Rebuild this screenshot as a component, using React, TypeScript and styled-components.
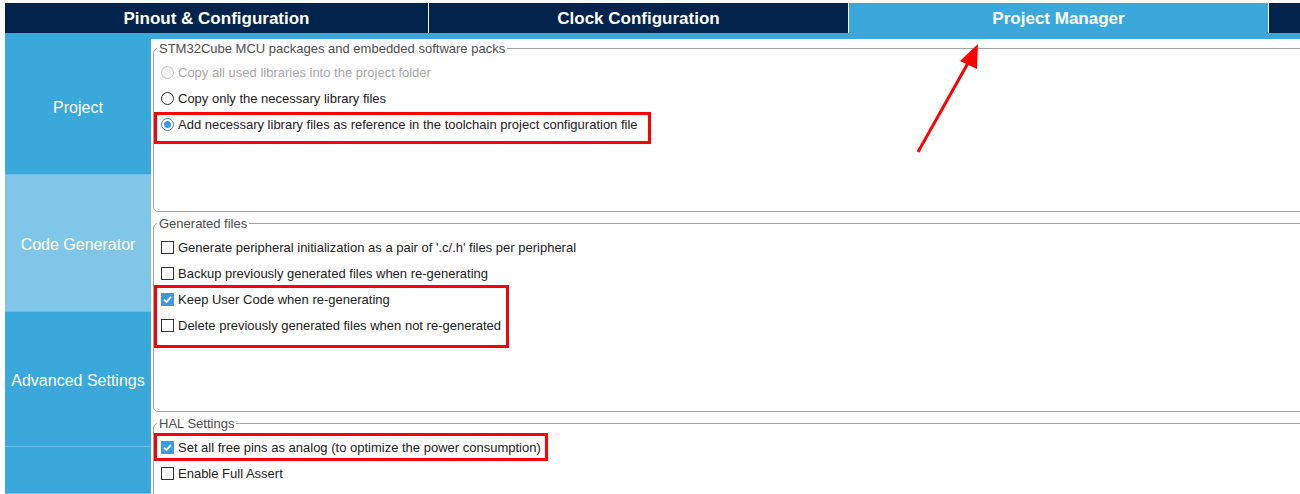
import React from "react";
import styled, { createGlobalStyle } from "styled-components";

const GlobalStyle = createGlobalStyle`
  html, body { margin: 0; padding: 0; background: #ffffff; }
  body { font-family: "Liberation Sans", Arial, sans-serif; }
`;

const NAVY = "#02234b";
const BLUE = "#3aa8db";
const LIGHT = "#7fc6e9";

const Page = styled.div`
  position: relative;
  width: 1300px;
  height: 494px;
  overflow: hidden;
  padding: 3px 0 0 5px;
  box-sizing: border-box;
  background: #fff;
`;

const TabBar = styled.div`
  display: grid;
  grid-template-columns: 423px 419px 419px 1fr;
  column-gap: 1px;
  height: 30px;
  background: #ffffff;
`;

const Tab = styled.div<{ $active?: boolean }>`
  display: flex;
  align-items: center;
  justify-content: center;
  padding-top: 2px;
  box-sizing: border-box;
  background: ${(p) => (p.$active ? BLUE : NAVY)};
  color: #ffffff;
  font-size: 17px;
  font-weight: bold;
`;

const Strip = styled.div`
  height: 6px;
  background: ${BLUE};
`;

const Main = styled.div`
  display: flex;
  height: 455px;
`;

const Sidebar = styled.div`
  width: 146px;
  flex: 0 0 146px;
  display: flex;
  flex-direction: column;
  background: ${BLUE};
`;

const NavItem = styled.div<{ $selected?: boolean; $h: number }>`
  height: ${(p) => p.$h}px;
  flex: 0 0 auto;
  box-sizing: border-box;
  display: flex;
  align-items: center;
  justify-content: center;
  padding-top: 3px;
  background: ${(p) => (p.$selected ? LIGHT : BLUE)};
  border-bottom: 1px solid #6cc0e8;
  color: #ffffff;
  font-size: 16px;
`;

const Content = styled.div`
  flex: 1;
  padding: 2px 0 0 2px;
  overflow: hidden;
  display: flex;
  flex-direction: column;
  gap: 4px;
`;

const Group = styled.fieldset<{ $h: number }>`
  margin: 0 -30px 0 0;
  padding: 3px 0 0 3px;
  height: ${(p) => p.$h}px;
  flex: 0 0 auto;
  box-sizing: border-box;
  border: 1px solid #a3a3a3;
  border-radius: 5px;
  min-width: 0;
`;

const Legend = styled.legend`
  padding: 0 2px;
  font-size: 13px;
  line-height: 15px;
  color: #4d4d4d;
`;

const Row = styled.div<{ $disabled?: boolean }>`
  height: 26px;
  display: flex;
  align-items: center;
  gap: 4px;
  padding-left: 4px;
  font-size: 13px;
  color: ${(p) => (p.$disabled ? "#a8a8a8" : "#222222")};
  white-space: nowrap;
`;

const Radio = styled.span<{ $checked?: boolean; $disabled?: boolean }>`
  width: 13px;
  height: 13px;
  box-sizing: border-box;
  border-radius: 50%;
  border: 1px solid
    ${(p) => (p.$disabled ? "#c4c4c4" : p.$checked ? "#3d7fb5" : "#333333")};
  background: ${(p) => (p.$disabled ? "#f2f2f2" : "#ffffff")};
  display: flex;
  align-items: center;
  justify-content: center;
  flex: 0 0 auto;
  &::after {
    content: "";
    display: ${(p) => (p.$checked ? "block" : "none")};
    width: 7px;
    height: 7px;
    border-radius: 50%;
    background: #3b9ae1;
  }
`;

const Check = styled.span<{ $checked?: boolean }>`
  width: 13px;
  height: 13px;
  box-sizing: border-box;
  border: 1px solid ${(p) => (p.$checked ? "#3b9ae1" : "#333333")};
  background: ${(p) => (p.$checked ? "#3b9ae1" : "#ffffff")};
  display: flex;
  align-items: center;
  justify-content: center;
  flex: 0 0 auto;
  svg {
    display: ${(p) => (p.$checked ? "block" : "none")};
  }
`;

const Highlight = styled.div<{ $t: number; $b: number; $l: number; $w: number }>`
  position: relative;
  &::after {
    content: "";
    position: absolute;
    top: ${(p) => p.$t}px;
    bottom: ${(p) => p.$b}px;
    left: ${(p) => p.$l}px;
    width: ${(p) => p.$w}px;
    border: 3px solid #ff0000;
    box-sizing: border-box;
    pointer-events: none;
  }
`;

const Arrow = styled.svg`
  position: absolute;
  left: 0;
  top: 0;
  pointer-events: none;
`;

const Tick = () => (
  <svg width="11" height="11" viewBox="0 0 11 11">
    <path d="M2 5.6 L4.5 8 L9 2.8" fill="none" stroke="#ffffff" strokeWidth="1.8" />
  </svg>
);

const CheckRow = ({ checked, label }: { checked?: boolean; label: string }) => (
  <Row>
    <Check $checked={checked}>
      <Tick />
    </Check>
    {label}
  </Row>
);

const RadioRow = ({
  checked,
  disabled,
  label,
}: {
  checked?: boolean;
  disabled?: boolean;
  label: string;
}) => (
  <Row $disabled={disabled}>
    <Radio $checked={checked} $disabled={disabled} />
    {label}
  </Row>
);

export default function App() {
  return (
    <>
      <GlobalStyle />
      <Page>
        <TabBar>
          <Tab>Pinout &amp; Configuration</Tab>
          <Tab>Clock Configuration</Tab>
          <Tab $active>Project Manager</Tab>
          <Tab />
        </TabBar>
        <Strip />
        <Main>
          <Sidebar>
            <NavItem $h={136}>Project</NavItem>
            <NavItem $h={137} $selected>
              Code Generator
            </NavItem>
            <NavItem $h={135}>Advanced Settings</NavItem>
            <NavItem $h={47} />
          </Sidebar>
          <Content>
            <Group $h={171}>
              <Legend>STM32Cube MCU packages and embedded software packs</Legend>
              <RadioRow disabled label="Copy all used libraries into the project folder" />
              <RadioRow label="Copy only the necessary library files" />
              <Highlight $t={1} $b={-7} $l={-3} $w={497}>
                <RadioRow checked label="Add necessary library files as reference in the toolchain project configuration file" />
              </Highlight>
            </Group>
            <Group $h={196}>
              <Legend>Generated files</Legend>
              <CheckRow label="Generate peripheral initialization as a pair of '.c/.h' files per peripheral" />
              <CheckRow label="Backup previously generated files when re-generating" />
              <Highlight $t={-1} $b={-10} $l={-3} $w={355}>
                <CheckRow checked label="Keep User Code when re-generating" />
                <CheckRow label="Delete previously generated files when not re-generated" />
              </Highlight>
            </Group>
            <Group $h={120}>
              <Legend>HAL Settings</Legend>
              <Highlight $t={-1} $b={-1} $l={-3} $w={394}>
                <CheckRow checked label="Set all free pins as analog (to optimize the power consumption)" />
              </Highlight>
              <CheckRow label="Enable Full Assert" />
            </Group>
          </Content>
        </Main>
        <Arrow width="1300" height="494" viewBox="0 0 1300 494">
          <line x1="918" y1="152" x2="968" y2="63" stroke="#ff0000" strokeWidth="3" />
          <polygon points="978,44 960,61 977,69" fill="#ff0000" />
        </Arrow>
      </Page>
    </>
  );
}
